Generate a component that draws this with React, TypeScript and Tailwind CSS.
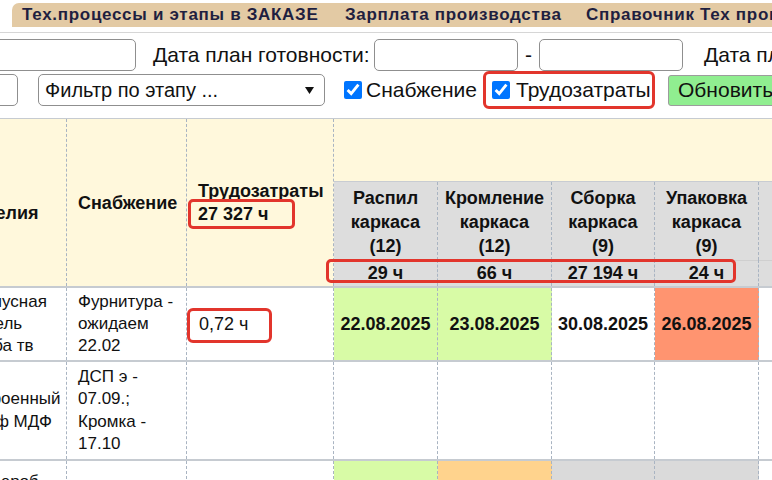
import React from "react";

const COLS = "grid grid-cols-[113px_120px_147px_104px_114px_103px_104px_120px]";
const DASH = "border-r border-dashed border-[#a9b4c2]";
const GREEN = "bg-[#d8fba6]";
const SALMON = "bg-[#ff9470]";
const ORANGE = "bg-[#ffd38d]";
const GRAY = "bg-[#dadada]";

function Check() {
  return (
    <input
      type="checkbox"
      checked
      readOnly
      className="m-0 h-[18px] w-[18px] accent-[#0075ff]"
    />
  );
}

function Lines({ items }: { items: string[] }) {
  return (
    <div>
      {items.map((t, i) => (
        <div key={i} className="whitespace-nowrap">
          {t}
        </div>
      ))}
    </div>
  );
}

export default function App() {
  const stages = [
    { n: ["Распил", "каркаса", "(12)"], t: "29 ч" },
    { n: ["Кромление", "каркаса", "(12)"], t: "66 ч" },
    { n: ["Сборка", "каркаса", "(9)"], t: "27 194 ч" },
    { n: ["Упаковка", "каркаса", "(9)"], t: "24 ч" },
    { n: ["Фасады", "", ""], t: "" },
  ];
  return (
    <div className="relative h-[480px] w-[772px] overflow-hidden bg-white font-['Liberation_Sans',Arial,sans-serif] text-[#111]">
      {/* Tab strip */}
      <div className="h-[33px] border-b border-[#d6d6d6] pt-[3px]">
        <div className="ml-[12px] flex h-[24px] items-center whitespace-nowrap rounded-tl-[7px] bg-[#e3caa4] text-[17px] font-bold tracking-[0.7px] text-[#1f1f40]">
          <div className="w-[333px] shrink-0 pl-[10px]">Тех.процессы и этапы в ЗАКАЗЕ</div>
          <div className="w-[241px] shrink-0">Зарплата производства</div>
          <div className="shrink-0">Справочник Тех процессов</div>
        </div>
      </div>

      {/* Toolbar row 1 */}
      <div className="mt-[6px] flex h-[32px] items-center whitespace-nowrap text-[21px]">
        <div className="ml-[-30px] h-[32px] w-[166px] shrink-0 rounded-[5px] border border-[#8f8f8f] bg-white" />
        <div className="ml-[17px] w-[221px] shrink-0">Дата план готовности:</div>
        <div className="h-[32px] w-[144px] shrink-0 rounded-[5px] border border-[#8f8f8f] bg-white" />
        <div className="w-[21px] shrink-0 text-center">-</div>
        <div className="h-[32px] w-[144px] shrink-0 rounded-[5px] border border-[#8f8f8f] bg-white" />
        <div className="ml-[21px] shrink-0">Дата план готовности:</div>
      </div>

      {/* Toolbar row 2 */}
      <div className="flex h-[38px] items-center whitespace-nowrap text-[21px]">
        <div className="ml-[-100px] h-[32px] w-[118px] shrink-0 rounded-[5px] border border-[#8f8f8f] bg-white" />
        <div className="ml-[20px] flex h-[32px] w-[287px] shrink-0 items-center rounded-[5px] border border-[#8f8f8f] bg-white pl-[6px] pr-[10px] text-[20px]">
          <span>Фильтр по этапу ...</span>
          <svg className="ml-auto" width="9" height="7" viewBox="0 0 9 7">
            <path d="M0 0 L9 0 L4.5 7 Z" fill="#111" />
          </svg>
        </div>
        <div className="ml-[19px] flex shrink-0 items-center">
          <Check />
        </div>
        <div className="ml-[4px] w-[117px] shrink-0">Снабжение</div>
        <div className="flex h-[38px] w-[172px] shrink-0 items-center rounded-[6px] border-[3px] border-[#e2352c] pl-[6px]">
          <Check />
          <span className="ml-[6px]">Трудозатраты</span>
        </div>
        <div className="ml-[13px] flex h-[31px] shrink-0 items-center rounded-[3px] border border-[#9c9c9c] bg-[#90ee90] px-[9px]">
          Обновить
        </div>
      </div>

      {/* Table */}
      <div className="ml-[-46px] mt-[9px]">
        {/* Header */}
        <div className={`${COLS} grid-rows-[63px_78px_26px] border-t border-b-2 border-[#c6cbd1]`}>
          <div className={`row-span-3 flex items-center bg-[#fff8dc] pl-[10px] text-[18px] font-bold leading-[21px] ${DASH}`}>
            <Lines items={["Тип", "изделия"]} />
          </div>
          <div className={`row-span-3 flex items-center bg-[#fff8dc] pl-[11px] text-[18px] font-bold leading-[22px] ${DASH}`}>
            Снабжение
          </div>
          <div className={`row-span-3 flex items-center bg-[#fff8dc] pl-[11px] text-[18px] font-bold leading-[23px] ${DASH}`}>
            <Lines items={["Трудозатраты", "27 327 ч"]} />
          </div>
          <div className="col-span-5 border-b border-[#c8ccd2] bg-[#fff8dc]" />
          {stages.map((s, i) => (
            <div key={"n" + i} className={`bg-[#dddddd] pt-[4px] text-center text-[18px] font-bold leading-[24px] ${DASH}`}>
              {s.n.map((l, j) => (
                <div key={j} className="h-[24px] whitespace-nowrap">
                  {l}
                </div>
              ))}
            </div>
          ))}
          {stages.map((s, i) => (
            <div
              key={"t" + i}
              className={`flex items-center justify-center bg-[#dddddd] text-[18px] font-bold shadow-[inset_0_1px_0_#cfcfcf] ${DASH}`}
            >
              {s.t}
            </div>
          ))}
        </div>

        {/* Row 1 */}
        <div className={`${COLS} h-[74px] border-b-2 border-[#c6cbd1] text-[17px] leading-[22px]`}>
          <div className={`flex items-center pl-[10px] ${DASH}`}>
            <Lines items={["Корпусная", "мебель", "Тумба тв"]} />
          </div>
          <div className={`flex items-center pl-[11px] ${DASH}`}>
            <Lines items={["Фурнитура -", "ожидаем", "22.02"]} />
          </div>
          <div className={`flex items-center pl-[12px] text-[18px] ${DASH}`}>0,72 ч</div>
          <div className={`flex items-center justify-center text-[18px] font-bold ${GREEN} ${DASH}`}>22.08.2025</div>
          <div className={`flex items-center justify-center text-[18px] font-bold ${GREEN} ${DASH}`}>23.08.2025</div>
          <div className={`flex items-center justify-center text-[18px] font-bold ${DASH}`}>30.08.2025</div>
          <div className={`flex items-center justify-center text-[18px] font-bold ${SALMON} ${DASH}`}>26.08.2025</div>
          <div className={DASH} />
        </div>

        {/* Row 2 */}
        <div className={`${COLS} h-[99px] border-b-2 border-[#c6cbd1] text-[17px] leading-[22.5px]`}>
          <div className={`flex items-center pl-[10px] ${DASH}`}>
            <Lines items={["Встроенный", "шкаф МДФ"]} />
          </div>
          <div className={`flex items-center pl-[11px] ${DASH}`}>
            <Lines items={["ДСП э -", "07.09.;", "Кромка -", "17.10"]} />
          </div>
          <div className={DASH} />
          <div className={DASH} />
          <div className={DASH} />
          <div className={DASH} />
          <div className={DASH} />
          <div className={DASH} />
        </div>

        {/* Row 3 */}
        <div className={`${COLS} h-[80px] border-b-2 border-[#c6cbd1] text-[17px] leading-[22px]`}>
          <div className={`pl-[10px] pt-[10px] ${DASH}`}>
            <Lines items={["Гардероб", "шкаф"]} />
          </div>
          <div className={DASH} />
          <div className={DASH} />
          <div className={`${GREEN} ${DASH}`} />
          <div className={`${ORANGE} ${DASH}`} />
          <div className={`${GRAY} ${DASH}`} />
          <div className={`${GRAY} ${DASH}`} />
          <div className={DASH} />
        </div>
      </div>

      {/* Annotation boxes */}
      <div className="pointer-events-none absolute left-[188px] top-[199px] h-[30px] w-[107px] rounded-[5px] border-[3px] border-[#e2352c]" />
      <div className="pointer-events-none absolute left-[326px] top-[259px] h-[24px] w-[410px] rounded-[5px] border-[3px] border-[#e2352c]" />
      <div className="pointer-events-none absolute left-[187px] top-[308px] h-[35px] w-[85px] rounded-[6px] border-[3px] border-[#e2352c]" />
    </div>
  );
}
